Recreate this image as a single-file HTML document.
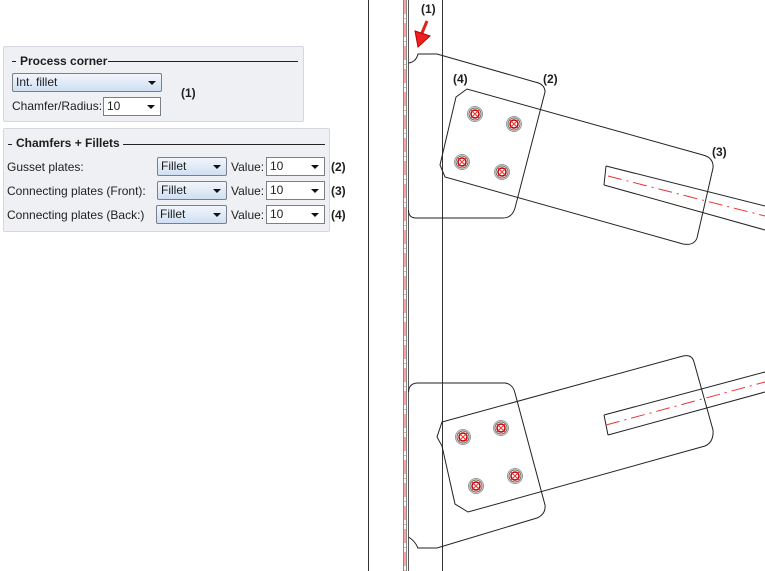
<!DOCTYPE html>
<html><head><meta charset="utf-8"><style>
body{margin:0;width:765px;height:571px;background:#fff;position:relative;overflow:hidden;font-family:"Liberation Sans",sans-serif;font-size:12px;color:#1e1e1e}
.p{position:absolute;background:#eef0f4;border:1px solid #d5d8de;border-radius:2px}
.t{position:absolute;font-weight:bold;font-size:12px;background:#eef0f4;padding:0 4px 0 2px}
.hr{position:absolute;height:1px;background:#222}
.cb{position:absolute;height:19px;box-sizing:border-box;border:1px solid #7a7f88;border-radius:2px;background:linear-gradient(#f2f6fc,#cfdff3);font-size:12px;line-height:17px;padding-left:3px}
.cw{position:absolute;height:19px;box-sizing:border-box;border:1px solid #7a7f88;background:#fff;font-size:12px;line-height:17px;padding-left:3px}
.cb:after,.cw:after{content:"";position:absolute;right:5px;top:7px;border-left:4px solid transparent;border-right:4px solid transparent;border-top:4px solid #111}
.l{position:absolute;font-size:12px}
.b{position:absolute;font-weight:bold;font-size:12px}
</style></head><body>
<div class="p" style="left:3px;top:46px;width:299px;height:74px"></div>
<div class="hr" style="left:12px;top:61px;width:4px"></div>
<div class="t" style="left:18px;top:54px">Process corner</div>
<div class="hr" style="left:108px;top:61px;width:190px"></div>
<div class="cb" style="left:12px;top:73px;width:150px">Int. fillet</div>
<div class="b" style="left:181px;top:86px">(1)</div>
<div class="l" style="left:12px;top:99px">Chamfer/Radius:</div>
<div class="cw" style="left:103px;top:97px;width:58px">10</div>

<div class="p" style="left:3px;top:128px;width:325px;height:102px"></div>
<div class="hr" style="left:8px;top:144px;width:4px"></div>
<div class="t" style="left:14px;top:136px">Chamfers + Fillets</div>
<div class="hr" style="left:123px;top:144px;width:202px"></div>
<div class="l" style="left:7px;top:160px">Gusset plates:</div>
<div class="l" style="left:7px;top:184px">Connecting plates (Front):</div>
<div class="l" style="left:7px;top:208px">Connecting plates (Back:)</div>
<div class="cb" style="left:157px;top:157px;width:70px">Fillet</div>
<div class="cb" style="left:157px;top:181px;width:70px">Fillet</div>
<div class="cb" style="left:156px;top:205px;width:71px">Fillet</div>
<div class="l" style="left:231px;top:160px">Value:</div>
<div class="l" style="left:231px;top:184px">Value:</div>
<div class="l" style="left:231px;top:208px">Value:</div>
<div class="cw" style="left:266px;top:157px;width:59px">10</div>
<div class="cw" style="left:266px;top:181px;width:59px">10</div>
<div class="cw" style="left:266px;top:205px;width:59px">10</div>
<div class="b" style="left:331px;top:160px">(2)</div>
<div class="b" style="left:331px;top:184px">(3)</div>
<div class="b" style="left:331px;top:208px">(4)</div>

<svg style="position:absolute;left:0;top:0" width="765" height="571" fill="none" stroke="#222" stroke-width="1">
<g stroke="#333">
<line x1="368.5" y1="0" x2="368.5" y2="571"/>
<line x1="403.5" y1="0" x2="403.5" y2="571" stroke="#888"/>
<line x1="406.5" y1="0" x2="406.5" y2="571" stroke="#888"/>
<line x1="408.5" y1="0" x2="408.5" y2="571" stroke="#555"/>
<line x1="442.5" y1="0" x2="442.5" y2="571"/>
</g>
<line x1="405" y1="0" x2="405" y2="571" stroke="#f44" stroke-dasharray="14,4,1,4"/>
<!-- top -->
<path d="M408.5 63 Q416 62 418 54 L437 54 L535 82 Q545 84 545 92 L515 208 Q512 218 503 218 L416 218 Q408.5 218 408.5 210"/>
<path d="M467 89 L456 97 L440 165 L445 177 L683 244 Q694 246 697 238 L713 168 Q714 158 703 155 Z"/>
<path d="M606 166 L765 206 M604 185 L765 230 M606 166 L604 185"/>
<line x1="608" y1="176" x2="765" y2="216" stroke="#e33" stroke-dasharray="14,5,2,5"/>
<!-- bottom -->
<path d="M408.5 392 Q409 383 418 383 L505 383 Q513 384 515 393 L545 505 Q546 514 537 518 L437 548 L418 548 Q415 541 408.5 537"/>
<path d="M442 422 L683 356 Q692 354 694 362 L713 430 Q714 442 705 446 L468 512 L455 504 L442 446 L437 437 Z"/>
<path d="M604 415 L765 372 M608 435 L765 392 M604 415 L608 435"/>
<line x1="606" y1="425" x2="765" y2="382" stroke="#e33" stroke-dasharray="14,5,2,5"/>
<g>
<g transform="translate(475,114)"><circle r="7.5" stroke="#999"/><circle r="6" stroke="#666"/><circle r="4" stroke="#b00" stroke-width="1.5"/><path d="M-4 -4L4 4M-4 4L4 -4" stroke="#e33"/></g>
<g transform="translate(514,124)"><circle r="7.5" stroke="#999"/><circle r="6" stroke="#666"/><circle r="4" stroke="#b00" stroke-width="1.5"/><path d="M-4 -4L4 4M-4 4L4 -4" stroke="#e33"/></g>
<g transform="translate(462,162)"><circle r="7.5" stroke="#999"/><circle r="6" stroke="#666"/><circle r="4" stroke="#b00" stroke-width="1.5"/><path d="M-4 -4L4 4M-4 4L4 -4" stroke="#e33"/></g>
<g transform="translate(502,172)"><circle r="7.5" stroke="#999"/><circle r="6" stroke="#666"/><circle r="4" stroke="#b00" stroke-width="1.5"/><path d="M-4 -4L4 4M-4 4L4 -4" stroke="#e33"/></g>
<g transform="translate(463,437)"><circle r="7.5" stroke="#999"/><circle r="6" stroke="#666"/><circle r="4" stroke="#b00" stroke-width="1.5"/><path d="M-4 -4L4 4M-4 4L4 -4" stroke="#e33"/></g>
<g transform="translate(501,428)"><circle r="7.5" stroke="#999"/><circle r="6" stroke="#666"/><circle r="4" stroke="#b00" stroke-width="1.5"/><path d="M-4 -4L4 4M-4 4L4 -4" stroke="#e33"/></g>
<g transform="translate(476,486)"><circle r="7.5" stroke="#999"/><circle r="6" stroke="#666"/><circle r="4" stroke="#b00" stroke-width="1.5"/><path d="M-4 -4L4 4M-4 4L4 -4" stroke="#e33"/></g>
<g transform="translate(515,476)"><circle r="7.5" stroke="#999"/><circle r="6" stroke="#666"/><circle r="4" stroke="#b00" stroke-width="1.5"/><path d="M-4 -4L4 4M-4 4L4 -4" stroke="#e33"/></g>
</g>
<path d="M427 21 L422 33" stroke="#d22" stroke-width="3"/>
<path d="M415 31 L430 36 L418 47 Z" fill="#e22" stroke="#b00"/>
</svg>
<div class="b" style="left:421px;top:2px">(1)</div>
<div class="b" style="left:453px;top:72px">(4)</div>
<div class="b" style="left:543px;top:72px">(2)</div>
<div class="b" style="left:712px;top:145px">(3)</div>
</body></html>
